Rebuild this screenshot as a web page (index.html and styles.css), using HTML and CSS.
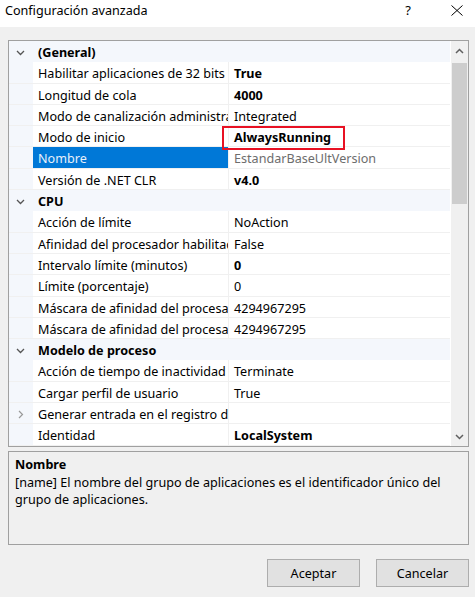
FILE: index.html
```html
<!DOCTYPE html>
<html lang="es">
<head>
    <meta charset="UTF-8">
    <title>Configuración avanzada</title>
    <link rel="stylesheet" href="styles.css">
</head>
<body>

<div class="titlebar">
    <span class="title">Configuración avanzada</span>
    <span class="help">?</span>
    <svg class="close" width="12" height="11" viewBox="0 0 12 11">
        <path d="M0.5 0.5 L11.5 10.5 M11.5 0.5 L0.5 10.5" stroke="#000" stroke-width="1" fill="none"/>
    </svg>
</div>

<div class="dialog">
    <div class="grid">
        <div class="rows">
            <div class="row category">
                <div class="gutter"><svg width="9" height="6" viewBox="0 0 9 6"><path d="M1 1 L4.5 4.5 L8 1" stroke="#555" stroke-width="1.3" fill="none"/></svg></div>
                <div class="cat-name">(General)</div>
            </div>
            <div class="row">
                <div class="gutter"></div>
                <div class="name">Habilitar aplicaciones de 32 bits</div>
                <div class="value bold">True</div>
            </div>
            <div class="row">
                <div class="gutter"></div>
                <div class="name">Longitud de cola</div>
                <div class="value bold">4000</div>
            </div>
            <div class="row">
                <div class="gutter"></div>
                <div class="name">Modo de canalización administrada</div>
                <div class="value">Integrated</div>
            </div>
            <div class="row">
                <div class="gutter"></div>
                <div class="name">Modo de inicio</div>
                <div class="value bold marked">AlwaysRunning</div>
            </div>
            <div class="row selected">
                <div class="gutter"></div>
                <div class="name">Nombre</div>
                <div class="value readonly">EstandarBaseUltVersion</div>
            </div>
            <div class="row">
                <div class="gutter"></div>
                <div class="name">Versión de .NET CLR</div>
                <div class="value bold">v4.0</div>
            </div>
            <div class="row category">
                <div class="gutter"><svg width="9" height="6" viewBox="0 0 9 6"><path d="M1 1 L4.5 4.5 L8 1" stroke="#555" stroke-width="1.3" fill="none"/></svg></div>
                <div class="cat-name">CPU</div>
            </div>
            <div class="row">
                <div class="gutter"></div>
                <div class="name">Acción de límite</div>
                <div class="value">NoAction</div>
            </div>
            <div class="row">
                <div class="gutter"></div>
                <div class="name">Afinidad del procesador habilitada</div>
                <div class="value">False</div>
            </div>
            <div class="row">
                <div class="gutter"></div>
                <div class="name">Intervalo límite (minutos)</div>
                <div class="value bold">0</div>
            </div>
            <div class="row">
                <div class="gutter"></div>
                <div class="name">Límite (porcentaje)</div>
                <div class="value">0</div>
            </div>
            <div class="row">
                <div class="gutter"></div>
                <div class="name">Máscara de afinidad del procesador</div>
                <div class="value">4294967295</div>
            </div>
            <div class="row">
                <div class="gutter"></div>
                <div class="name">Máscara de afinidad del procesador (64 bits)</div>
                <div class="value">4294967295</div>
            </div>
            <div class="row category">
                <div class="gutter"><svg width="9" height="6" viewBox="0 0 9 6"><path d="M1 1 L4.5 4.5 L8 1" stroke="#555" stroke-width="1.3" fill="none"/></svg></div>
                <div class="cat-name">Modelo de proceso</div>
            </div>
            <div class="row">
                <div class="gutter"></div>
                <div class="name">Acción de tiempo de inactividad</div>
                <div class="value">Terminate</div>
            </div>
            <div class="row">
                <div class="gutter"></div>
                <div class="name">Cargar perfil de usuario</div>
                <div class="value">True</div>
            </div>
            <div class="row">
                <div class="gutter"><svg width="6" height="9" viewBox="0 0 6 9"><path d="M1 1 L4.5 4.5 L1 8" stroke="#999" stroke-width="1.2" fill="none"/></svg></div>
                <div class="name">Generar entrada en el registro de eventos</div>
                <div class="value"></div>
            </div>
            <div class="row">
                <div class="gutter"></div>
                <div class="name">Identidad</div>
                <div class="value bold">LocalSystem</div>
            </div>
        </div>
        <div class="scrollbar">
            <div class="arrow"><svg width="9" height="6" viewBox="0 0 9 6"><path d="M1 5 L4.5 1.5 L8 5" stroke="#606060" stroke-width="1.5" fill="none"/></svg></div>
            <div class="track">
                <div class="thumb"></div>
            </div>
            <div class="arrow"><svg width="9" height="6" viewBox="0 0 9 6"><path d="M1 1 L4.5 4.5 L8 1" stroke="#606060" stroke-width="1.5" fill="none"/></svg></div>
        </div>
    </div>

    <div class="desc">
        <div class="desc-title">Nombre</div>
        <div class="desc-text">[name] El nombre del grupo de aplicaciones es el identificador único del grupo de aplicaciones.</div>
    </div>

    <div class="buttons">
        <button class="btn">Aceptar</button>
        <button class="btn">Cancelar</button>
    </div>
</div>

</body>
</html>
```

FILE: styles.css
```css
body {
    margin: 0;
    background-color: #f0f0f0;
    font-family: "Noto Sans", "Open Sans", sans-serif;
    font-size: 12.6px;
    color: #000;
}

/* window caption */
.titlebar {
    display: flex;
    align-items: center;
    height: 27px;
    padding: 0 12px 0 5px;
    background-color: #fff;
}

.title {
    flex: 1;
    margin-top: -7px;
}

.help {
    margin: -7px 40px 0 0;
    font-size: 13px;
}

.close {
    margin-top: -6px;
}

.dialog {
    padding: 13px 6px 0 8px;
}

/* property grid */
.grid {
    display: flex;
    height: 405px;
    border: 1px solid #a0a0a0;
    background-color: #fff;
}

.rows {
    flex: 1;
    overflow: hidden;
}

.row {
    display: flex;
    height: 21.3px;
    line-height: 24px;
    box-sizing: border-box;
    border-bottom: 1px solid #f0f0f0;
}

.row.category {
    background-color: #f4f7fc;
    border-bottom: none;
}

.gutter {
    width: 24px;
    flex: none;
    display: flex;
    align-items: center;
    justify-content: center;
    padding-top: 2px;
    box-sizing: border-box;
    background-color: #f4f7fc;
}

.gutter svg {
    margin-left: -1px;
}

.cat-name {
    font-weight: bold;
    padding-left: 5px;
}

.name {
    width: 196px;
    flex: none;
    padding-left: 5px;
    box-sizing: border-box;
    white-space: nowrap;
    overflow: hidden;
    border-right: 1px solid #f0f0f0;
}

.value {
    flex: 1;
    padding-left: 5px;
    white-space: nowrap;
    overflow: hidden;
}

.bold {
    font-weight: bold;
}

.readonly {
    color: #6d6d6d;
}

.selected .name {
    background-color: #0078d7;
    color: #e8f0fa;
}

/* red outline round the start mode value */
.marked {
    position: relative;
    overflow: visible;
}

.marked::after {
    content: "";
    position: absolute;
    left: -7px;
    top: 0;
    width: 123px;
    height: 24px;
    box-sizing: border-box;
    border: 2px solid #e81123;
    z-index: 1;
}

.scrollbar {
    width: 17px;
    flex: none;
    display: flex;
    flex-direction: column;
    background-color: #f0f0f0;
    border-left: 1px solid #fff;
}

.arrow {
    height: 19px;
    display: flex;
    align-items: center;
    justify-content: center;
}

.track {
    flex: 1;
}

.thumb {
    margin: 3px 1px 0 1px;
    height: 141px;
    background-color: #cdcdcd;
}

/* description panel */
.desc {
    margin-top: 4px;
    height: 88px;
    border: 1px solid #a0a0a0;
    padding: 4px 8px 0 6px;
    line-height: 17.5px;
}

.desc-title {
    font-weight: bold;
}

.buttons {
    display: flex;
    justify-content: flex-end;
    gap: 16px;
    margin-top: 14px;
}

.btn {
    width: 93px;
    height: 28px;
    font-family: inherit;
    font-size: 12.6px;
    background-color: #e1e1e1;
    border: 1px solid #adadad;
    color: #000;
    padding: 0;
}
```
